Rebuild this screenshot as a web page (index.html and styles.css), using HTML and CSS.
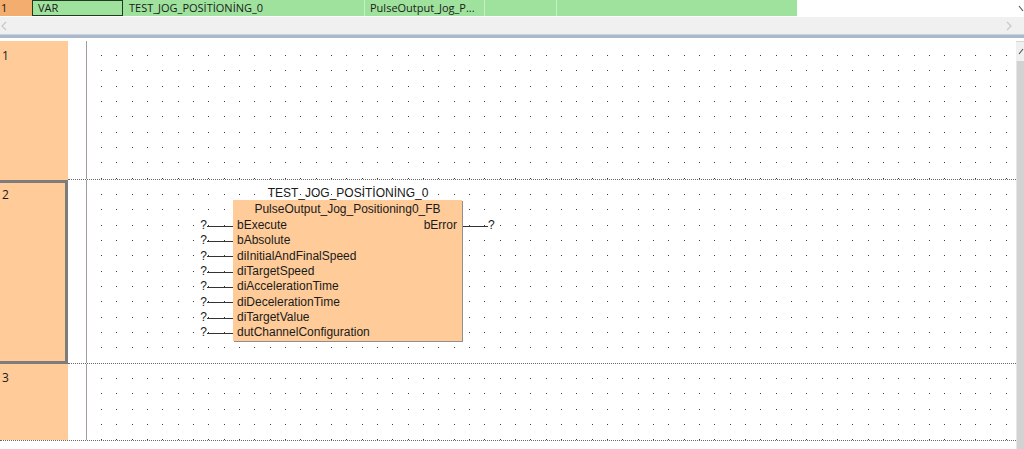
FILE: index.html
```html
<!DOCTYPE html>
<html>
<head>
<meta charset="utf-8">
<link rel="stylesheet" href="styles.css">
</head>
<body>
<div class="app">
  <div class="tabs">
    <div class="cell num">1</div>
    <div class="cell var">VAR</div>
    <div class="cell name">TEST_JOG_POSİTİONİNG_0</div>
    <div class="cell type">PulseOutput_Jog_P...</div>
    <div class="cell e1"></div>
    <div class="cell e2"></div>
    <div class="blank"></div>
    <div class="chev"><svg width="6" height="17" viewBox="0 0 6 17"><polyline points="1,6 5,11" fill="none" stroke="#555" stroke-width="1.2"/></svg></div>
  </div>
  <div class="hscroll">
    <svg width="6" height="10" viewBox="0 0 6 10"><polyline points="5,1 1,5 5,9" fill="none" stroke="#c8c8c8" stroke-width="1.2"/></svg>
    <svg width="6" height="10" viewBox="0 0 6 10"><polyline points="1,1 5,5 1,9" fill="none" stroke="#c8c8c8" stroke-width="1.2"/></svg>
  </div>
  <div class="splitter"></div>
  <div class="main">
    <div class="rows">
      <div class="row r1">
        <div class="rhead">1</div>
        <div class="rbody">
          <div class="gap"></div>
          <div class="canvas"></div>
        </div>
      </div>
      <div class="row r2">
        <div class="rhead sel">2</div>
        <div class="rbody">
          <div class="gap"></div>
          <div class="canvas">
            <div class="fb">
              <div class="fb-title">TEST_JOG_POSİTİONİNG_0</div>
              <div class="fb-left">
                <div class="pin-space"></div>
                <div class="pin">?<i></i></div>
                <div class="pin">?<i></i></div>
                <div class="pin">?<i></i></div>
                <div class="pin">?<i></i></div>
                <div class="pin">?<i></i></div>
                <div class="pin">?<i></i></div>
                <div class="pin">?<i></i></div>
                <div class="pin">?<i></i></div>
              </div>
              <div class="fb-box">
                <div class="fb-type">PulseOutput_Jog_Positioning0_FB</div>
                <div class="fb-row"><span>bExecute</span><span>bError</span></div>
                <div class="fb-row"><span>bAbsolute</span></div>
                <div class="fb-row"><span>diInitialAndFinalSpeed</span></div>
                <div class="fb-row"><span>diTargetSpeed</span></div>
                <div class="fb-row"><span>diAccelerationTime</span></div>
                <div class="fb-row"><span>diDecelerationTime</span></div>
                <div class="fb-row"><span>diTargetValue</span></div>
                <div class="fb-row"><span>dutChannelConfiguration</span></div>
              </div>
              <div class="fb-right">
                <div class="pin-space"></div>
                <div class="pin out"><i></i>?</div>
              </div>
            </div>
          </div>
        </div>
      </div>
      <div class="row r3">
        <div class="rhead">3</div>
        <div class="rbody">
          <div class="gap"></div>
          <div class="canvas"></div>
        </div>
      </div>
    </div>
    <div class="vscroll">
      <div class="vs-btn"><svg width="8" height="20" viewBox="0 0 8 20"><polyline points="3,12 7,7" fill="none" stroke="#555" stroke-width="1.2"/></svg></div>
      <div class="vs-track"></div>
    </div>
  </div>
</div>
</body>
</html>
```
FILE: styles.css
```css
* { box-sizing: border-box; }
html, body { margin: 0; padding: 0; }
body {
  width: 1024px;
  height: 449px;
  overflow: hidden;
  background: #fff;
  color: #1a1a1a;
  font-family: "Liberation Sans", Arial, sans-serif;
}
.app { display: flex; flex-direction: column; height: 449px; }

/* top variable row */
.tabs {
  display: flex;
  height: 17px;
  border-bottom: 1px solid #fff;
  font-family: "Open Sans", "Noto Sans", sans-serif;
  font-size: 11px;
  color: #1a1a1a;
}
.cell {
  height: 16px;
  line-height: 16px;
  background: #9fe29d;
  padding-left: 6px;
  white-space: nowrap;
  overflow: hidden;
  border-right: 1px solid #c8f0c6;
}
.num { width: 32px; background: #f3ad6f; padding-left: 1px; border-right: none; }
.var { width: 91px; border: 1px solid #203a20; padding-left: 5px; line-height: 14px; }
.name { width: 242px; }
.type { width: 120px; padding-left: 5px; }
.e1 { width: 72px; }
.e2 { width: 240px; border-right: none; }
.blank { flex: 1; }
.chev { width: 6px; height: 16px; }
.chev svg { display: block; }

.hscroll {
  height: 17px;
  background: #f0f0f0;
  display: flex;
  justify-content: space-between;
  align-items: center;
  padding: 0 12px 0 1px;
}
.hscroll svg { display: block; }

.splitter {
  height: 7px;
  border-top: 1px solid #c9d2dd;
  background: linear-gradient(to bottom, #a9b8ca 0, #a9b8ca 3px, #fff 3px);
}

.main { display: flex; flex: 1; }
.rows { width: 1016px; display: flex; flex-direction: column; }

.row { display: flex; }
.r1 { height: 139px; }
.r2 { height: 184px; }
.r3 { height: 77px; border-bottom: 1px dotted #666; }

.rhead {
  width: 68px;
  background: #ffcc99;
  font-family: "Open Sans", "Noto Sans", sans-serif;
  font-size: 12px;
  line-height: 16px;
  padding: 7px 0 0 2px;
  color: #1a1a1a;
}
.rhead.sel {
  border: 3px solid #7c7c7c;
  border-left: none;
  padding: 4px 0 0 2px;
}
.r3 .rhead { padding-top: 6px; }

.rbody { flex: 1; display: flex; }
.r1 .rbody, .r2 .rbody { border-bottom: 1px dotted #666; }
.gap { width: 18px; }
.canvas {
  flex: 1;
  border-left: 1px solid #a39d98;
  border-right: 4px solid #fff;
  background-image:
    linear-gradient(to bottom, #fff 14px, transparent 14px, transparent 15px, #fff 15px, #fff 29px, transparent 29px, transparent 30px, #fff 30px, #fff 45px, transparent 45px),
    linear-gradient(to right, #fff 14px, #3a3a3a 14px, #3a3a3a 15px, #fff 15px, #fff 29px, #3a3a3a 29px, #3a3a3a 30px, #fff 30px, #fff 45px, #3a3a3a 45px);
  background-size: 100% 46px, 46px 100%;
  background-repeat: repeat;
}

/* function block */
.fb {
  display: grid;
  grid-template-columns: 35px 230px 40px;
  grid-template-rows: 14.5px auto;
  margin: 5.5px 0 0 111px;
  width: max-content;
  font-size: 12px;
  line-height: 15.333px;
  color: #1a1a1a;
}
.fb-title {
  grid-column: 2;
  grid-row: 1;
  text-align: center;
  white-space: nowrap;
}
.fb-left { grid-column: 1; grid-row: 2; }
.fb-box {
  grid-column: 2;
  grid-row: 2;
  width: 229px;
  background: #ffcc99;
  box-shadow: 1px 1px 0 #8f8f8f;
}
.fb-right { grid-column: 3; grid-row: 2; }
.pin-space { height: 18px; }
.pin {
  height: 15.333px;
  display: flex;
  align-items: center;
  justify-content: flex-end;
}
.pin i {
  display: block;
  width: 26px;
  height: 1px;
  background: #333;
  margin-top: 1px;
}
.pin.out { justify-content: flex-start; }
.pin.out i { width: 25px; }
.fb-type {
  height: 18px;
  padding-top: 1.5px;
  text-align: center;
  white-space: nowrap;
}
.fb-row {
  height: 15.333px;
  display: flex;
  justify-content: space-between;
  padding: 0 5px 0 4px;
  white-space: nowrap;
}

.vscroll { width: 8px; display: flex; flex-direction: column; }
.vs-btn { height: 20px; background: #f0f0f0; border-top: 1px solid #d6d6d6; }
.vs-btn svg { display: block; }
.vs-track { flex: 1; background: #d2d2d2; border-left: 1px solid #e6e6e6; }
```
